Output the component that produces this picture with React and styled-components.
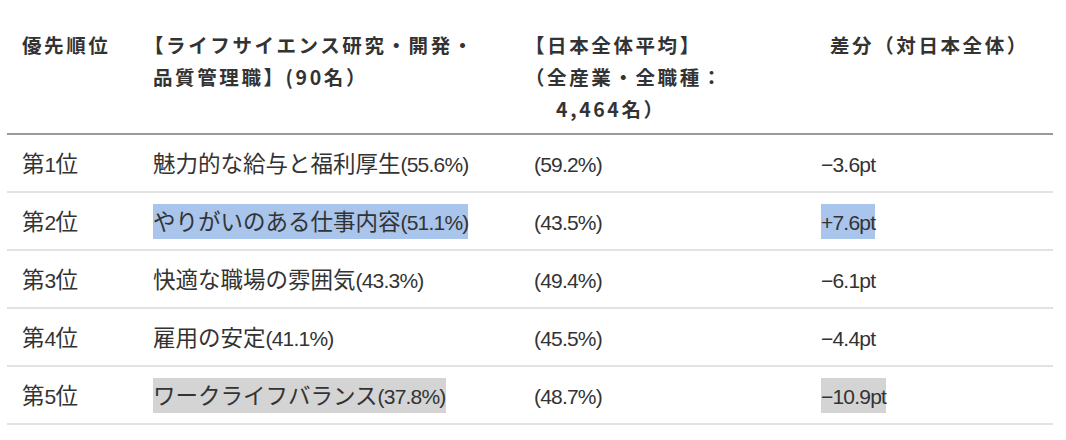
import React from 'react'
import styled, { createGlobalStyle } from 'styled-components'

const GlobalStyle = createGlobalStyle`
    html, body {
        margin: 0;
        padding: 0;
        background: #fff;
    }

    body {
        font-family: "Noto Sans CJK JP", sans-serif;
        color: #333;
    }
`

const Wrap = styled.div`
    padding: 0 13px 0 7px;
`;

const Table = styled.table`
    width: 100%;
    border-collapse: collapse;
    table-layout: fixed;
`;

const HeadCell = styled.th`
    text-align: left;
    vertical-align: top;
    padding: 29px 0 8px ${(p) => p.$indent || 15}px;
    font-family: "Noto Sans CJK JP", sans-serif;
    font-size: 19.5px;
    font-weight: 700;
    line-height: 32px;
    letter-spacing: 2.6px;
    color: #333;
    border-bottom: 2px solid #9a9a9a;
`;

// full-width opening brackets sit right in their box; pull them back to the column edge
const Open = styled.span`
    margin-left: -9px;
`;

const Row = styled.tr`
    border-bottom: 2px solid #e2e2e2;
`;

const Cell = styled.td`
    height: 56px;
    padding: 0 0 0 15px;
    vertical-align: middle;
    font-size: 22.5px;
    line-height: 32px;
    color: #333;
    white-space: nowrap;
`;

const Mark = styled.span`
    display: inline-block;
    line-height: 32px;
    background: ${(p) => (p.$tone === 'blue' ? '#a9c5eb' : p.$tone === 'gray' ? '#d4d4d4' : 'transparent')};
`;

// narrow latin figures like the reference
const Num = styled.span`
    font-family: "Liberation Sans", sans-serif;
    font-size: 21px;
    letter-spacing: -0.8px;
`;

function Text({ children })
{
    const parts = children.split(/([\x00-\x7f\u2212]+)/).filter(Boolean);
    return parts.map((p, i) => (/^[\x00-\x7f\u2212]+$/.test(p) ? <Num key={i}>{p}</Num> : <span key={i}>{p}</span>));
}

const rows = [
    { rank: '第1位', item: '魅力的な給与と福利厚生(55.6%)', avg: '(59.2%)', diff: '−3.6pt' },
    { rank: '第2位', item: 'やりがいのある仕事内容(51.1%)', avg: '(43.5%)', diff: '+7.6pt', tone: 'blue' },
    { rank: '第3位', item: '快適な職場の雰囲気(43.3%)', avg: '(49.4%)', diff: '−6.1pt' },
    { rank: '第4位', item: '雇用の安定(41.1%)', avg: '(45.5%)', diff: '−4.4pt' },
    { rank: '第5位', item: 'ワークライフバランス(37.8%)', avg: '(48.7%)', diff: '−10.9pt', tone: 'gray' },
];

export default function App()
{
    return (
        <Wrap>
            <GlobalStyle />
            <Table>
                <colgroup>
                    <col style={{ width: '131px' }} />
                    <col style={{ width: '381px' }} />
                    <col style={{ width: '287px' }} />
                    <col />
                </colgroup>
                <thead>
                    <tr>
                        <HeadCell>優先順位</HeadCell>
                        <HeadCell><Open>【</Open>ライフサイエンス研究・開発・<br />品質管理職】(90名）</HeadCell>
                        <HeadCell><Open>【</Open>日本全体平均】<br /><Open>（</Open>全産業・全職種：<br />　4,464名）</HeadCell>
                        <HeadCell $indent={24}>差分（対日本全体）</HeadCell>
                    </tr>
                </thead>
                <tbody>
                    {rows.map((r) => (
                        <Row key={r.rank}>
                            <Cell><Text>{r.rank}</Text></Cell>
                            <Cell><Mark $tone={r.tone}><Text>{r.item}</Text></Mark></Cell>
                            <Cell><Text>{r.avg}</Text></Cell>
                            <Cell><Mark $tone={r.tone}><Text>{r.diff}</Text></Mark></Cell>
                        </Row>
                    ))}
                </tbody>
            </Table>
        </Wrap>
    );
}
